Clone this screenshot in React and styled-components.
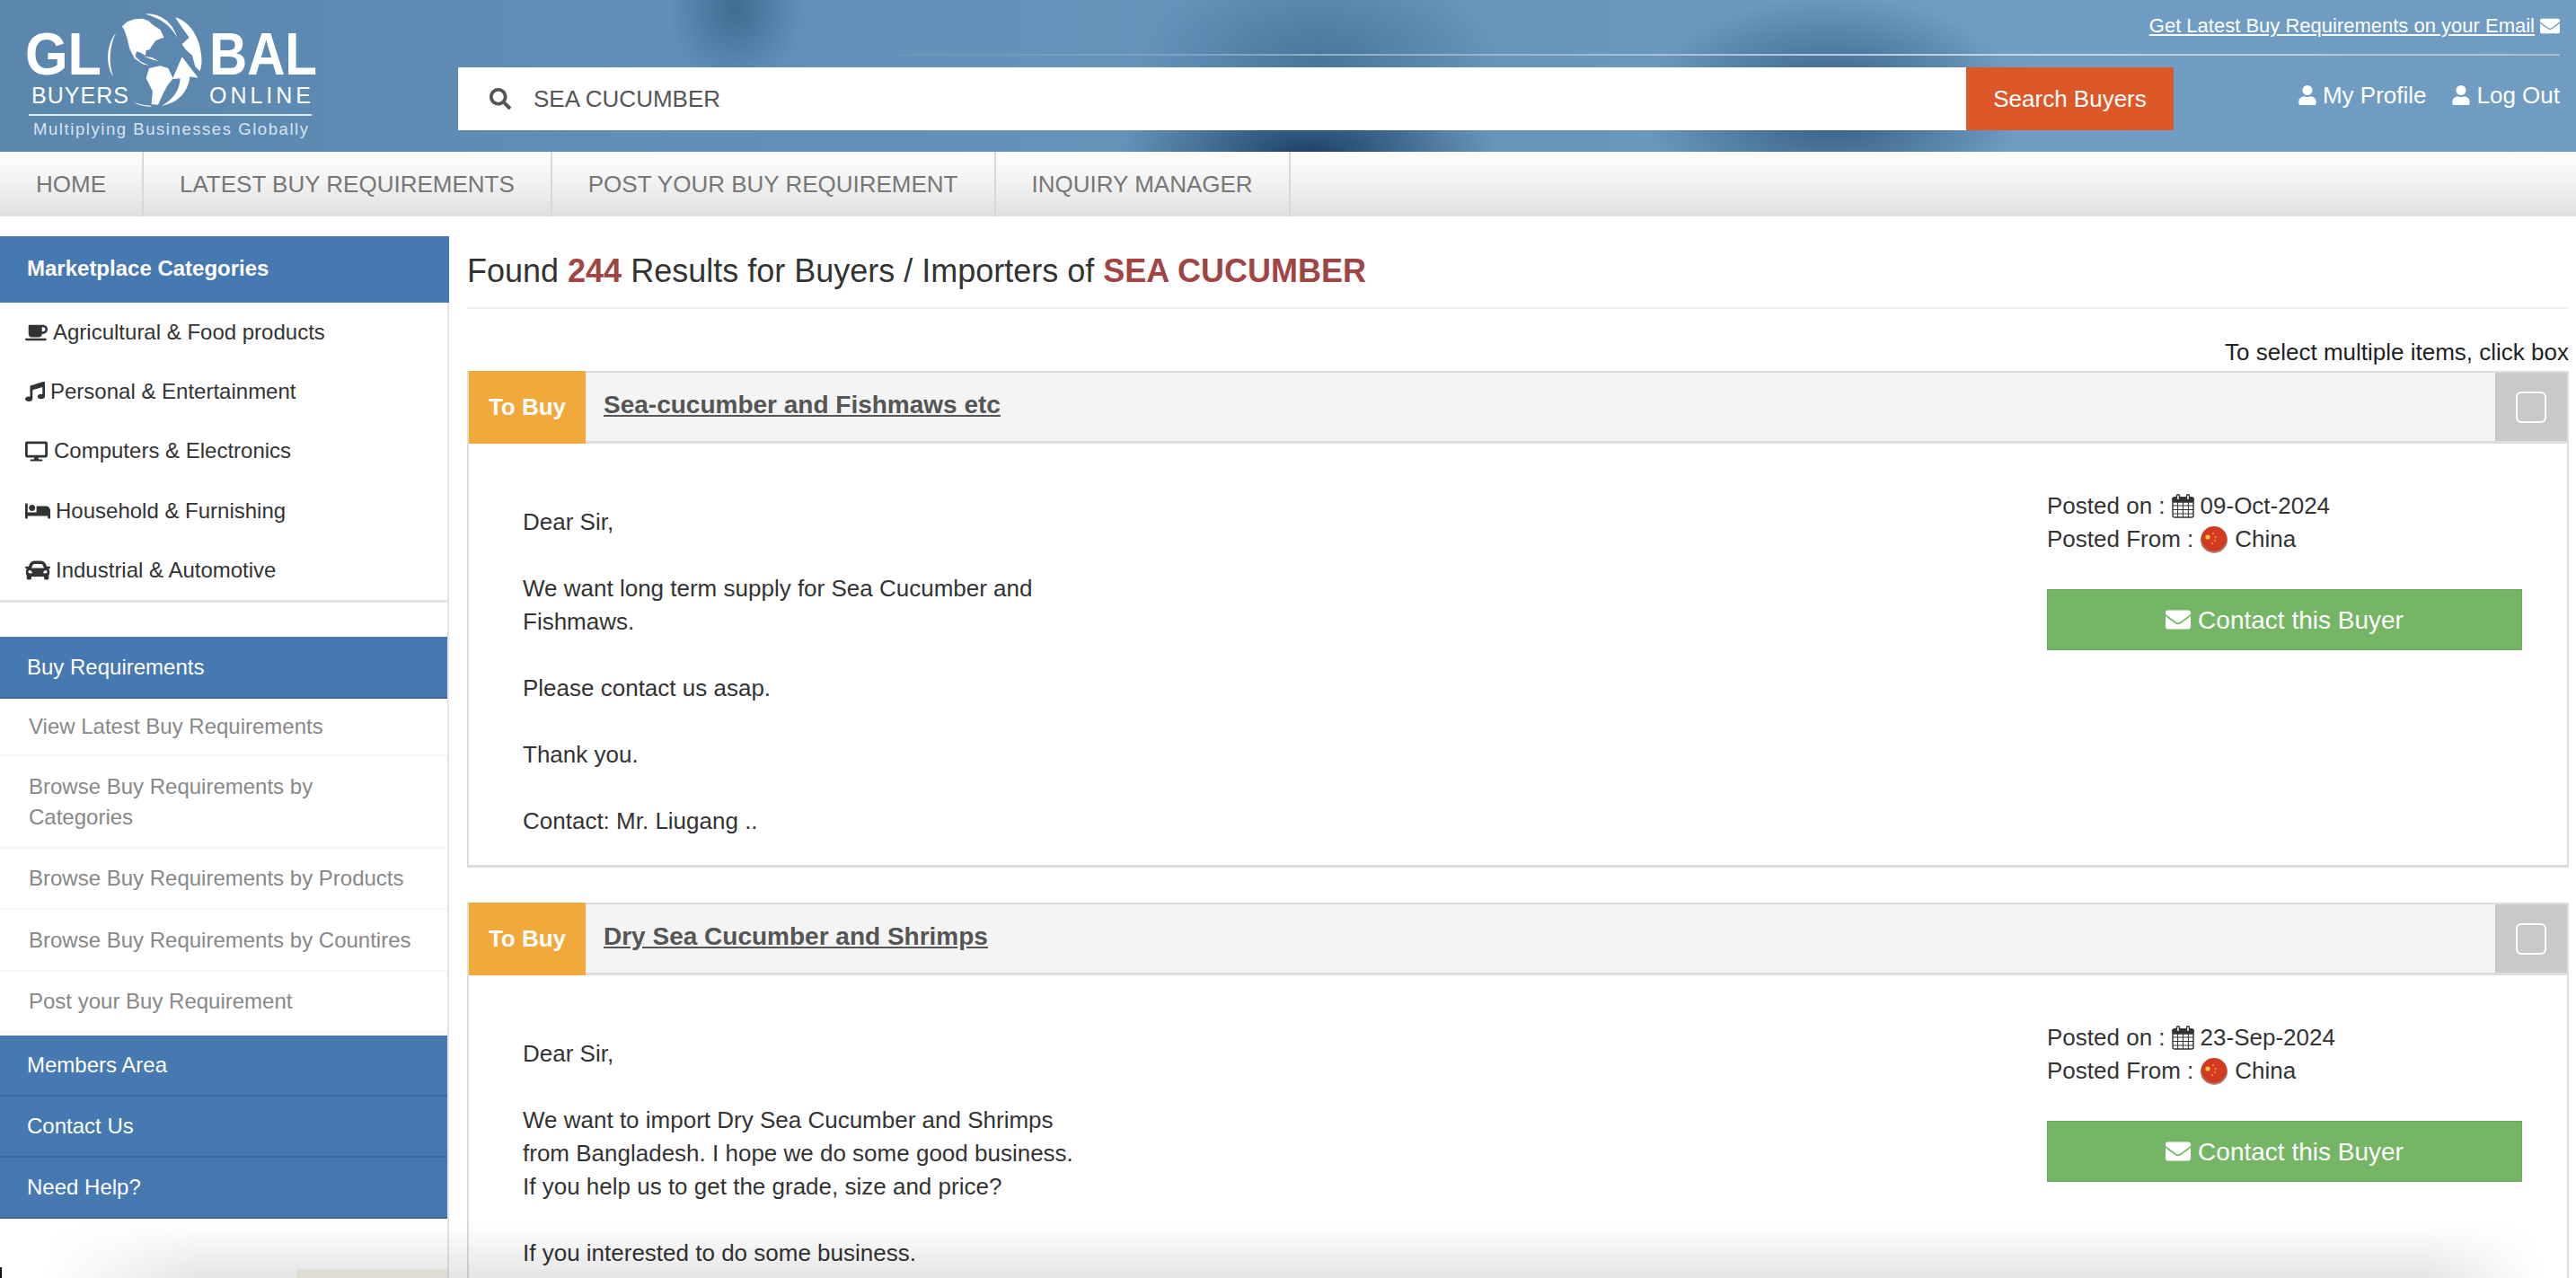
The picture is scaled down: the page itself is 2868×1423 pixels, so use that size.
import React from "react"
import styled, { createGlobalStyle } from "styled-components"
import { FaCar, FaBed, FaCoffee, FaDesktop, FaEnvelope, FaMusic, FaSearch, FaUser } from "react-icons/fa"

const Global = createGlobalStyle`
  html, body {
    margin: 0;
    padding: 0;
    background: #fff;
    font-family: "Liberation Sans", Arial, sans-serif;
    color: #333;
  }
  a { color: inherit; }
`

const Page = styled.div`
  position: relative;
  width: 2868px;
  height: 1423px;
  overflow: hidden;
`

const BottomFade = styled.div`
  position: absolute;
  left: 0;
  right: 0;
  bottom: 0;
  height: 62px;
  pointer-events: none;
  background: linear-gradient(180deg, rgba(0, 0, 0, 0), rgba(0, 0, 0, 0.1));
  mask-image: linear-gradient(90deg, transparent 50px, #000 220px, #000 2700px, transparent 2830px);
`

const CornerMark = styled.div`
  position: absolute;
  left: 0;
  bottom: 0;
  width: 2px;
  height: 12px;
  background: #111;
`

const Header = styled.header`
  display: flex;
  height: 169px;
  box-sizing: border-box;
  padding-right: 18px;
  background:
    radial-gradient(ellipse 75px 85px at 819px 10px, rgba(45, 85, 125, 0.62), transparent),
    radial-gradient(ellipse 210px 80px at 1457px 172px, rgba(24, 60, 100, 0.95), transparent),
    radial-gradient(ellipse 200px 110px at 1470px 70px, rgba(45, 85, 125, 0.5), transparent),
    radial-gradient(ellipse 210px 125px at 2040px 120px, rgba(35, 75, 115, 0.8), transparent),
    linear-gradient(90deg, #5b86ae 0%, #6090b8 30%, #6895bc 60%, #709dc3 80%, #709cc2 100%);
`

const LogoBox = styled.a`
  flex: 0 0 510px;
  display: block;
`

const HeaderMain = styled.div`
  flex: 1;
  display: flex;
  flex-direction: column;
`

const TopBar = styled.div`
  height: 62px;
  box-sizing: border-box;
  padding-top: 13px;
  display: flex;
  justify-content: flex-end;
  align-items: flex-start;
  gap: 6px;
  color: #fff;
  font-size: 22px;
  line-height: 32px;
  border-bottom: 2px solid;
  border-image: linear-gradient(90deg, transparent 18%, #8ea9c0 40%, #c9d6e0 75%, #b5bcc2 100%) 1;
`

const EmailIcon = styled(FaEnvelope)`
  font-size: 22px;
  margin-top: 5px;
`

const SearchRow = styled.div`
  display: flex;
  align-items: center;
  margin-top: 13px;
`

const SearchBox = styled.div`
  width: 1910px;
  height: 70px;
  display: flex;
  align-items: stretch;
  background: #fff;
`

const SearchField = styled.div`
  flex: 1;
  display: flex;
  align-items: center;
  padding-left: 35px;
  gap: 25px;
  color: #555;
  font-size: 26px;
`

const SearchButton = styled.button`
  width: 231px;
  border: 0;
  padding: 0;
  background: #dc5828;
  color: #fff;
  font: 26px "Liberation Sans", Arial, sans-serif;
`

const UserLinks = styled.div`
  margin-left: auto;
  margin-top: -8px;
  display: flex;
  gap: 28px;
  color: #fff;
  font-size: 26px;
`

const UserLink = styled.span`
  display: flex;
  align-items: center;
  gap: 6px;
`

const Nav = styled.nav`
  display: flex;
  height: 72px;
  background: linear-gradient(180deg, #fefefe 0%, #f3f3f3 45%, #dfdfdf 100%);
`

const NavItem = styled.a`
  display: flex;
  align-items: center;
  padding: 0 40px;
  border-right: 2px solid #d8d8d8;
  color: #777;
  font-size: 26px;
`

const Columns = styled.div`
  display: flex;
  align-items: stretch;
  height: 1182px;
`

const Sidebar = styled.aside`
  flex: 0 0 500px;
  box-sizing: border-box;
  margin-top: 22px;
  border-right: 2px solid #e4e4e4;
  display: flex;
  flex-direction: column;
`

const SideHead = styled.div`
  flex: none;
  display: flex;
  align-items: center;
  box-sizing: border-box;
  height: ${(p) => p.$h}px;
  margin-right: ${(p) => (p.$wide ? -2 : 0)}px;
  padding-left: 30px;
  background: #4678b1;
  border-bottom: 2px solid ${(p) => (p.$ruled ? "#3c6898" : "#4678b1")};
  color: #fff;
  font-size: 24px;
  font-weight: ${(p) => (p.$bold ? 700 : 400)};
`

const CategoryList = styled.ul`
  flex: none;
  margin: 0 -2px 0 0;
  padding: 0 0 0 28px;
  list-style: none;
  height: 334px;
  box-sizing: border-box;
  border-bottom: 3px solid #e5e5e5;
`

const CategoryItem = styled.li`
  height: 66.2px;
  display: flex;
  align-items: center;
  gap: ${(p) => p.$gap}px;
  font-size: 24px;
  color: #333;
`

const RequirementList = styled.ul`
  flex: none;
  margin: 0;
  padding: 0;
  list-style: none;
`

const RequirementItem = styled.li`
  box-sizing: border-box;
  height: ${(p) => p.$h}px;
  padding: 0 34px 0 32px;
  display: flex;
  align-items: center;
  border-bottom: 2px solid #f6f6f6;
  color: #888;
  font-size: 24px;
  line-height: 34px;
`

const Spacer = styled.div`
  height: ${(p) => p.$h}px;
  flex: none;
`

const PromoStub = styled.div`
  flex: none;
  height: 40px;
  margin-top: 56px;
  margin-left: 330px;
  background: #f8f5ea;
`

const Main = styled.main`
  flex: 1;
  padding: 22px 8px 0 20px;
`

const Heading = styled.h1`
  margin: 0;
  height: 81px;
  box-sizing: border-box;
  padding-top: 17px;
  border-bottom: 2px solid #eee;
  font-size: 36px;
  line-height: 44px;
  font-weight: 400;
  color: #333;
`

const Hot = styled.strong`
  color: #a04444;
`

const SelectNote = styled.div`
  margin-top: 30px;
  height: 37px;
  text-align: right;
  font-size: 26px;
  line-height: 37px;
  color: #222;
`

const Card = styled.article`
  margin-top: ${(p) => p.$mt}px;
  border: 2px solid #ddd;
  border-bottom-width: 3px;
`

const CardHead = styled.div`
  display: flex;
  height: 76px;
  background: #f4f4f4;
  border-bottom: 3px solid #ddd;
`

const Badge = styled.div`
  width: 130px;
  display: flex;
  align-items: center;
  justify-content: center;
  margin-top: -2px;
  margin-bottom: -3px;
  background: #f2a93b;
  color: #fff;
  font-size: 26px;
  font-weight: 700;
`

const CardTitle = styled.a`
  flex: 1;
  padding: 0 0 5px 20px;
  align-self: center;
  color: #555;
  font-size: 28px;
  font-weight: 700;
  text-decoration: underline;
`

const CheckCell = styled.div`
  width: 80px;
  display: flex;
  align-items: center;
  justify-content: center;
  background: #c9c9c9;
`

const CheckBox = styled.span`
  display: block;
  box-sizing: border-box;
  width: 34px;
  height: 35px;
  border: 2px solid #fff;
  border-radius: 6px;
`

const CardBody = styled.div`
  display: flex;
  justify-content: space-between;
  padding: 69px 50px 30px 60px;
`

const Message = styled.p`
  margin: 0;
  font-size: 26px;
  line-height: 37px;
  color: #333;
`

const Side = styled.div`
  width: 529px;
  margin-top: -18px;
  font-size: 26px;
  line-height: 37px;
`

const MetaLine = styled.div`
  display: flex;
  align-items: center;
  gap: 7px;
  height: 37px;
`

const FlagSlot = styled.span`
  display: flex;
  margin: 0 1px 0 1px;
`

const ContactButton = styled.a`
  display: flex;
  align-items: center;
  justify-content: center;
  gap: 8px;
  height: 68px;
  margin-top: 37px;
  box-sizing: border-box;
  border: 1px solid #6aa85c;
  background: #74b566;
  color: #fff;
  font-size: 28px;
`

const Logo = () => (
  <svg width="370" height="169" viewBox="0 0 370 169" fill="#fff" fontFamily="Liberation Sans, Arial, sans-serif">
    <text x="28" y="83" fontSize="66" fontWeight="700" textLength="85" lengthAdjust="spacingAndGlyphs">GL</text>
    <text x="233" y="83" fontSize="66" fontWeight="700" textLength="120" lengthAdjust="spacingAndGlyphs">BAL</text>
    <text x="35" y="115" fontSize="25" textLength="108">BUYERS</text>
    <text x="233" y="115" fontSize="25" textLength="113">ONLINE</text>
    <rect x="32" y="127" width="315" height="2" fill="#e3ebf2" />
    <text x="37" y="150" fontSize="18.5" fill="#d6e3ee" textLength="306">Multiplying Businesses Globally</text>
    <g transform="translate(10 0) scale(.3333)">
      {/* north america */}
      <path d="M378 88 L396 72 L420 64 L446 62 L466 70 L482 84 L506 100 L518 126 L504 130 L490 136 L478 152 L470 166 L458 168 L456 186 L440 176 L426 172 L422 188 L440 206 L468 218 L446 214 L420 196 L404 166 L394 126 L386 102 Z" />
      <path d="M450 188 L478 192 L500 205 L478 199 Z" />
      {/* south america */}
      <path d="M468 228 L505 220 L532 228 L548 262 L530 285 L515 312 L498 350 L476 348 L480 305 L458 262 Z" />
      {/* arrow */}
      <path d="M510 353 C545 335 570 305 572 262 L546 264 L578 190 L632 260 L604 256 C600 300 570 345 510 353 Z" />
      {/* top crescent */}
      <path d="M455 47 C500 42 545 70 562 125 C540 85 505 60 455 47 Z" />
      {/* old world */}
      <path d="M555 58 C600 70 638 120 643 190 C645 210 642 225 638 238 L622 222 L612 185 L590 165 L578 148 L602 125 L578 92 Z" />
      <path d="M357 110 C325 150 322 215 348 256 C332 210 335 155 357 110 Z" />
      <path d="M415 342 C435 352 455 356 475 356 L475 353 C455 352 435 348 415 342 Z" />
    </g>
  </svg>
)

const CalendarIcon = () => (
  <svg width="25" height="27" viewBox="0 0 25 27" fill="none" stroke="#333" strokeWidth="1.4">
    <rect x="1" y="4" width="23" height="22" rx="2" />
    <rect x="1" y="4" width="23" height="5" rx="1.5" fill="#333" />
    <path d="M1 13h23M1 17.500h23M1 22h23M6.600 9v17M12.500 9v17M18.400 9v17" strokeWidth="1" />
    <rect x="5.500" y="0.700" width="3" height="6" rx="1.400" fill="#fff" />
    <rect x="16.500" y="0.700" width="3" height="6" rx="1.400" fill="#fff" />
  </svg>
)

const ChinaFlag = () => (
  <svg width="30" height="30" viewBox="0 0 30 30">
    <defs>
      <radialGradient id="flagShade" cx="50%" cy="45%" r="55%">
        <stop offset="0%" stopColor="#dc3a22" />
        <stop offset="80%" stopColor="#cf3a22" />
        <stop offset="100%" stopColor="#a9a09a" />
      </radialGradient>
    </defs>
    <circle cx="15" cy="15" r="15" fill="url(#flagShade)" />
    <circle cx="8" cy="12" r="2.600" fill="#f3c93a" />
    <circle cx="14" cy="8" r="1" fill="#eaa834" />
    <circle cx="16.500" cy="12" r="1" fill="#eaa834" />
    <circle cx="16" cy="16" r="1" fill="#eaa834" />
    <circle cx="13" cy="19" r="1" fill="#eaa834" />
  </svg>
)

const categories = [
  { icon: <FaCoffee size={25} />, label: "Agricultural & Food products", gap: 6 },
  { icon: <FaMusic size={22} />, label: "Personal & Entertainment", gap: 6 },
  { icon: <FaDesktop size={25} />, label: "Computers & Electronics", gap: 7 },
  { icon: <FaBed size={28} />, label: "Household & Furnishing", gap: 6 },
  { icon: <FaCar size={28} />, label: "Industrial & Automotive", gap: 6 },
]

const requirements = [
  { label: "View Latest Buy Requirements", h: 64 },
  { label: "Browse Buy Requirements by Categories", h: 103 },
  { label: "Browse Buy Requirements by Products", h: 68 },
  { label: "Browse Buy Requirements by Countires", h: 69 },
  { label: "Post your Buy Requirement", h: 68 },
]

const buyers = [
  {
    title: "Sea-cucumber and Fishmaws etc",
    date: "09-Oct-2024",
    lines: [
      "Dear Sir,",
      "",
      "We want long term supply for Sea Cucumber and",
      "Fishmaws.",
      "",
      "Please contact us asap.",
      "",
      "Thank you.",
      "",
      "Contact: Mr. Liugang ..",
    ],
  },
  {
    title: "Dry Sea Cucumber and Shrimps",
    date: "23-Sep-2024",
    lines: [
      "Dear Sir,",
      "",
      "We want to import Dry Sea Cucumber and Shrimps",
      "from Bangladesh. I hope we do some good business.",
      "If you help us to get the grade, size and price?",
      "",
      "If you interested to do some business.",
    ],
  },
]

const App = () => (
  <Page>
    <Global />
    <Header>
      <LogoBox>
        <Logo />
      </LogoBox>
      <HeaderMain>
        <TopBar>
          <a href="#email">Get Latest Buy Requirements on your Email</a>
          <EmailIcon />
        </TopBar>
        <SearchRow>
          <SearchBox>
            <SearchField>
              <FaSearch size={24} />
              SEA CUCUMBER
            </SearchField>
            <SearchButton>Search Buyers</SearchButton>
          </SearchBox>
          <UserLinks>
            <UserLink><FaUser size={22} />My Profile</UserLink>
            <UserLink><FaUser size={22} />Log Out</UserLink>
          </UserLinks>
        </SearchRow>
      </HeaderMain>
    </Header>

    <Nav>
      <NavItem>HOME</NavItem>
      <NavItem>LATEST BUY REQUIREMENTS</NavItem>
      <NavItem>POST YOUR BUY REQUIREMENT</NavItem>
      <NavItem>INQUIRY MANAGER</NavItem>
    </Nav>

    <Columns>
      <Sidebar>
        <SideHead $h={74} $bold $wide>Marketplace Categories</SideHead>
        <CategoryList>
          {categories.map((c) => (
            <CategoryItem key={c.label} $gap={c.gap}>
              {c.icon}
              {c.label}
            </CategoryItem>
          ))}
        </CategoryList>
        <Spacer $h={38} />
        <SideHead $h={69} $ruled>Buy Requirements</SideHead>
        <RequirementList>
          {requirements.map((r) => (
            <RequirementItem key={r.label} $h={r.h}>
              <span>{r.label}</span>
            </RequirementItem>
          ))}
        </RequirementList>
        <Spacer $h={3} />
        <SideHead $h={68} $ruled>Members Area</SideHead>
        <SideHead $h={68} $ruled>Contact Us</SideHead>
        <SideHead $h={68} $ruled>Need Help?</SideHead>
        <PromoStub />
      </Sidebar>

      <Main>
        <Heading>
          Found <Hot>244</Hot> Results for Buyers / Importers of <Hot>SEA CUCUMBER</Hot>
        </Heading>
        <SelectNote>To select multiple items, click box</SelectNote>
        {buyers.map((b, i) => (
          <Card key={b.title} $mt={i === 0 ? 2 : 39}>
            <CardHead>
              <Badge>To Buy</Badge>
              <CardTitle>{b.title}</CardTitle>
              <CheckCell>
                <CheckBox />
              </CheckCell>
            </CardHead>
            <CardBody>
              <Message>
                {b.lines.map((line, n) => (
                  <React.Fragment key={n}>
                    {line}
                    <br />
                  </React.Fragment>
                ))}
              </Message>
              <Side>
                <MetaLine>Posted on : <CalendarIcon /> {b.date}</MetaLine>
                <MetaLine>Posted From : <FlagSlot><ChinaFlag /></FlagSlot> China</MetaLine>
                <ContactButton>
                  <FaEnvelope size={28} />
                  Contact this Buyer
                </ContactButton>
              </Side>
            </CardBody>
          </Card>
        ))}
      </Main>
    </Columns>
    <BottomFade />
    <CornerMark />
  </Page>
)

export default App
